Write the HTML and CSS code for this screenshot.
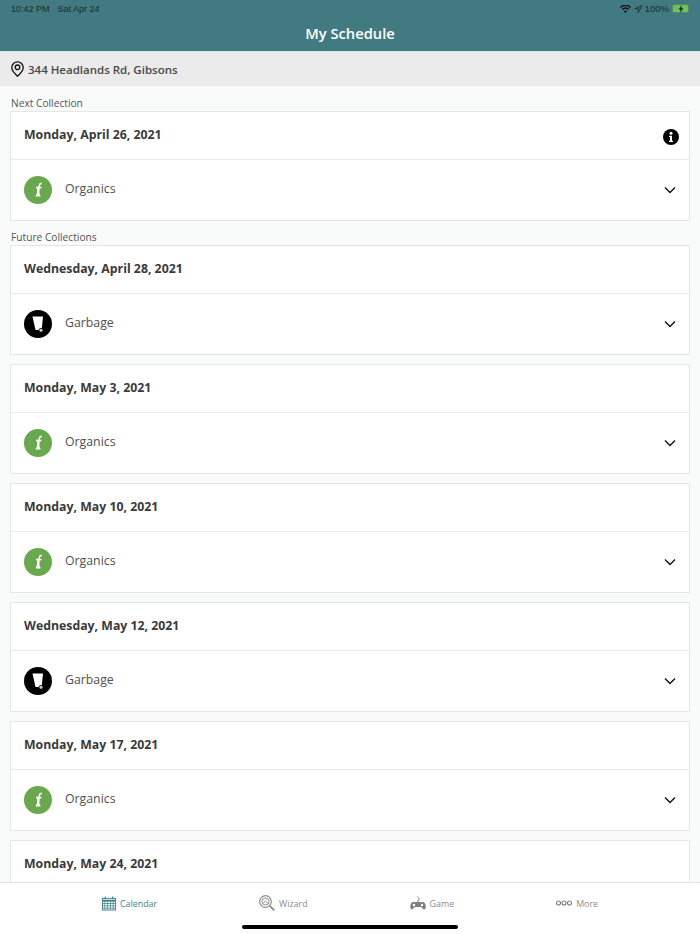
FILE: index.html
```html
<!DOCTYPE html>
<html lang="en">
<head>
<meta charset="utf-8">
<title>My Schedule</title>
<link rel="stylesheet" href="styles.css">
</head>
<body>
<svg class="defs" width="0" height="0" aria-hidden="true">
  <symbol id="organics" viewBox="0 0 28 28">
    <circle cx="14" cy="14" r="14" fill="#6aa84f"/>
    <path d="M18 6.400c-1.600.1-2.900.8-3.200 2.200l-.2 1.900-2.500.3-.1 1.400 1.200.3-.2 4.200c0 1-.5 1.700-1.200 2.300v1.400h4.600v-1.400c-.7-.5-1-1.200-1-2.100l.3-4.500 1.600-.1.200-1.500-1.700 0 .1-1.500c.2-.6.800-.8 1.500-.9z" fill="#fff"/>
  </symbol>
  <symbol id="garbage" viewBox="0 0 28 28">
    <circle cx="14" cy="14" r="14" fill="#000"/>
    <path d="M8.500 6.500h10.500l-1.300 13.500h-6.200z" fill="#fff"/>
    <circle cx="17" cy="20.300" r="2" fill="#ccc" stroke="#000" stroke-width=".8"/>
  </symbol>
  <symbol id="chev" viewBox="0 0 12 8">
    <path d="M1 1.500l5 5 5-5" fill="none" stroke="#111" stroke-width="1.400"/>
  </symbol>
</svg>
<div class="app">
  <header class="topbar">
    <div class="status">
      <span class="status-left"><span>10:42 PM</span><span>Sat Apr 24</span></span>
      <span class="status-right">
        <svg class="wifi" width="11" height="8" viewBox="0 0 22 16"><path d="M11 16l-3.200-3.600a4.500 4.500 0 0 1 6.400 0zM5.800 10.200L3.600 7.800a10.500 10.500 0 0 1 14.800 0l-2.200 2.400a7.400 7.400 0 0 0-10.400 0zM1.800 5.800L0 3.800a15.500 15.500 0 0 1 22 0l-1.800 2a12.800 12.800 0 0 0-18.400 0z" fill="#111"/></svg>
        <svg class="loc" width="7" height="8" viewBox="0 0 8 8"><path d="M8 0L0 3.600h3.700V8z" fill="none" stroke="#222" stroke-width=".9"/></svg>
        <span class="pct">100%</span>
        <span class="battery"><svg width="6" height="8" viewBox="0 0 6 8"><path d="M3.800 0L.6 4.500h2L2 8l3.400-4.800h-2z" fill="#123"/></svg></span>
      </span>
    </div>
    <h1 class="title">My Schedule</h1>
  </header>
  <div class="address">
    <svg width="13" height="16" viewBox="0 0 13 16"><path d="M6.500.8a5.700 5.700 0 0 0-5.700 5.700c0 3.500 3.500 6.700 5.700 8.700 2.200-2 5.700-5.200 5.700-8.700A5.700 5.700 0 0 0 6.500.8z" fill="none" stroke="#111" stroke-width="1.300"/><circle cx="6.500" cy="6.300" r="2.300" fill="none" stroke="#111" stroke-width="1.300"/></svg>
    <span>344 Headlands Rd, Gibsons</span>
  </div>
  <main class="list">
    <div class="label label-first">Next Collection</div>
    <section class="card">
      <div class="card-head"><span>Monday, April 26, 2021</span>
        <svg class="info" width="16" height="16" viewBox="0 0 16 16"><circle cx="8" cy="8" r="8" fill="#000"/><circle cx="8" cy="4.200" r="1.500" fill="#fff"/><path d="M6 6.800h3v5h1v1.200H6v-1.200h1V8H6z" fill="#fff"/></svg>
      </div>
      <div class="card-row"><svg class="kind"><use href="#organics"/></svg><span class="name">Organics</span><svg class="chev"><use href="#chev"/></svg></div>
    </section>
    <div class="label">Future Collections</div>
    <section class="card">
      <div class="card-head"><span>Wednesday, April 28, 2021</span></div>
      <div class="card-row"><svg class="kind"><use href="#garbage"/></svg><span class="name">Garbage</span><svg class="chev"><use href="#chev"/></svg></div>
    </section>
    <section class="card">
      <div class="card-head"><span>Monday, May 3, 2021</span></div>
      <div class="card-row"><svg class="kind"><use href="#organics"/></svg><span class="name">Organics</span><svg class="chev"><use href="#chev"/></svg></div>
    </section>
    <section class="card">
      <div class="card-head"><span>Monday, May 10, 2021</span></div>
      <div class="card-row"><svg class="kind"><use href="#organics"/></svg><span class="name">Organics</span><svg class="chev"><use href="#chev"/></svg></div>
    </section>
    <section class="card">
      <div class="card-head"><span>Wednesday, May 12, 2021</span></div>
      <div class="card-row"><svg class="kind"><use href="#garbage"/></svg><span class="name">Garbage</span><svg class="chev"><use href="#chev"/></svg></div>
    </section>
    <section class="card">
      <div class="card-head"><span>Monday, May 17, 2021</span></div>
      <div class="card-row"><svg class="kind"><use href="#organics"/></svg><span class="name">Organics</span><svg class="chev"><use href="#chev"/></svg></div>
    </section>
    <section class="card">
      <div class="card-head"><span>Monday, May 24, 2021</span></div>
    </section>
  </main>
  <nav class="tabs">
    <div class="tab tab-active">
      <svg width="14" height="15" viewBox="0 0 15 15" fill="none" stroke="#418087"><rect x=".5" y="2" width="14" height="12.500"/><path d="M.5 4.500h14" stroke-width="2"/><path d="M.5 7.500h14M.5 10h14M.5 12.500h14M3 5v9M6 5v9M9 5v9M12 5v9" stroke-width=".8"/><path d="M3.500 0v3M11.500 0v3" stroke-width="1.200"/></svg>
      <span>Calendar</span>
    </div>
    <div class="tab">
      <svg width="16" height="16" viewBox="0 0 16 16" fill="none" stroke="#8c8c8c"><circle cx="6.500" cy="6.500" r="5.800" stroke-width="1.200"/><circle cx="6.500" cy="6.500" r="3.500" stroke-width="1"/><path d="M4.500 8.500l2-3 2 3" stroke-width=".8"/><path d="M10.800 10.800l4.500 4.500" stroke-width="1.800"/></svg>
      <span>Wizard</span>
    </div>
    <div class="tab">
      <svg width="16" height="16" viewBox="0 0 16 16"><path d="M3.500 7h9c2 0 3 1.500 3.200 4 .2 2-.3 3.500-1.500 3.500-1.300 0-1.700-1.800-3-2.500h-6.400c-1.300.7-1.700 2.500-3 2.500C1.100 14.500.1 13 .3 11c.2-2.500 1.200-4 3.200-4z" fill="#7f7f7f"/><path d="M8 7V5.200c1.500-.4 1.500-1.700.6-2.300L7.300 1.500" fill="none" stroke="#7f7f7f"/><circle cx="4" cy="10" r="1.200" fill="#fff"/><circle cx="12" cy="10" r="1.200" fill="#fff"/></svg>
      <span>Game</span>
    </div>
    <div class="tab">
      <svg width="16" height="6" viewBox="0 0 16 6" fill="none" stroke="#7f7f7f" stroke-width="1.100"><circle cx="2.500" cy="3" r="2"/><circle cx="8" cy="3" r="2"/><circle cx="13.500" cy="3" r="2"/></svg>
      <span>More</span>
    </div>
    <div class="home-bar"></div>
  </nav>
</div>
</body>
</html>
```

FILE: styles.css
```css
* { box-sizing: border-box; }

html, body {
  margin: 0;
  height: 934px;
  overflow: hidden;
}

body {
  font-family: "Open Sans", "Liberation Sans", sans-serif;
  color: #404040;
  background: #f9fbfb;
}

.defs { position: absolute; }

.app {
  display: flex;
  flex-direction: column;
  height: 934px;
}

.topbar {
  flex: none;
  height: 51px;
  background: #417a80;
  padding: 3px 11px 0;
}

.status {
  display: flex;
  justify-content: space-between;
  align-items: center;
  height: 11px;
  font-family: "Liberation Sans", sans-serif;
  font-size: 9px;
  color: #1d2b2d;
}

.status-left {
  display: flex;
  gap: 8px;
}

.status-right {
  display: flex;
  align-items: center;
  gap: 3px;
  font-size: 9.500px;
}

.loc { margin-left: 1px; }

.battery {
  position: relative;
  display: flex;
  align-items: center;
  justify-content: center;
  width: 17px;
  height: 9px;
  background: #6cc25c;
  border: 1px solid #5a8a63;
  border-radius: 2px;
}

.title {
  margin: 6px 0 0;
  font-size: 14.700px;
  line-height: 26px;
  font-weight: 600;
  text-align: center;
  color: #fff;
}

.address {
  flex: none;
  display: flex;
  align-items: center;
  gap: 4px;
  height: 35px;
  padding: 0 11px;
  background: #ebebeb;
  border-top: 1px solid #e2e5e5;
  font-size: 11.500px;
  font-weight: 600;
  color: #484848;
}

.list {
  flex: 1;
  min-height: 0;
  overflow: hidden;
  padding: 0 10px;
}

.label {
  height: 15px;
  margin: 7px 0 0 1px;
  font-size: 10.200px;
  line-height: 15px;
  color: #555;
}

.label-first { margin-top: 10px; }

.card {
  height: 110px;
  margin-bottom: 9px;
  background: #fff;
  border: 1px solid #e4e6e6;
}

.card-head {
  display: flex;
  align-items: center;
  justify-content: space-between;
  height: 48px;
  padding: 0 10px 3px 13px;
  border-bottom: 1px solid #e8eaea;
  font-size: 12.300px;
  font-weight: 700;
  color: #3a3a3a;
}

.info { margin-top: 5px; }

.card-row {
  display: flex;
  align-items: center;
  height: 60px;
  padding: 0 13px;
}

.kind {
  flex: none;
  width: 28px;
  height: 28px;
}

.name {
  flex: 1;
  margin: 0 0 3px 13px;
  font-size: 12.300px;
  color: #505050;
}

.chev {
  flex: none;
  width: 12px;
  height: 8px;
}

.tabs {
  position: relative;
  flex: none;
  display: flex;
  justify-content: space-evenly;
  height: 52px;
  padding-bottom: 11px;
  background: #fff;
  border-top: 1px solid #e3e3e3;
}

.tab {
  display: flex;
  align-items: center;
  gap: 4px;
  font-size: 8.900px;
  color: #8c8c8c;
}

.tab-active { color: #418087; }

.home-bar {
  position: absolute;
  left: 242px;
  bottom: 5px;
  width: 216px;
  height: 4px;
  border-radius: 2px;
  background: #000;
}
```
